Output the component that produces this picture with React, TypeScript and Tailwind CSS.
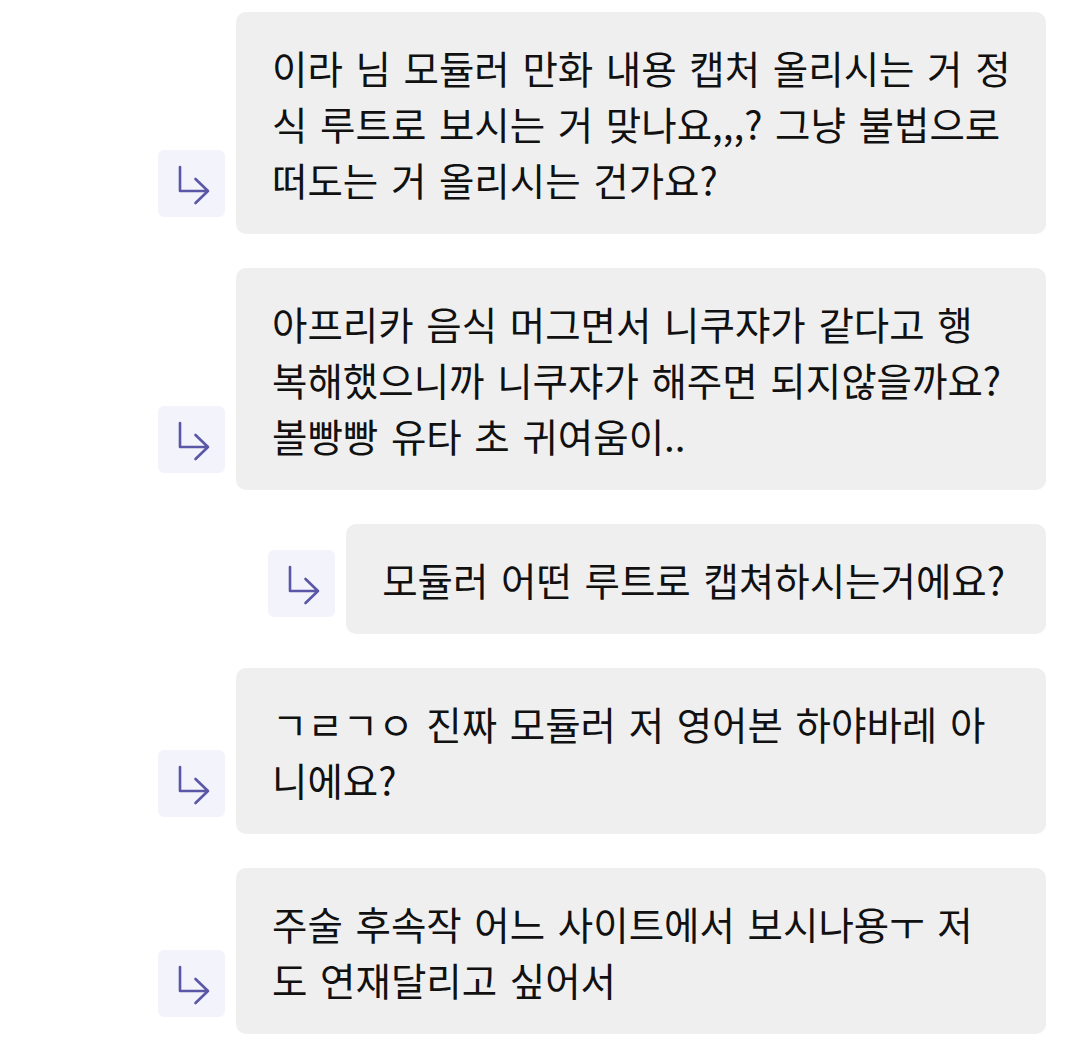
import React from "react";

const messages: string[][] = [
  ["이라 님 모듈러 만화 내용 캡처 올리시는 거 정", "식 루트로 보시는 거 맞나요,,,? 그냥 불법으로", "떠도는 거 올리시는 건가요?"],
  ["아프리카 음식 머그면서 니쿠쟈가 같다고 행", "복해했으니까 니쿠쟈가 해주면 되지않을까요?", "볼빵빵 유타 초 귀여움이.."],
  ["모듈러 어떤 루트로 캡쳐하시는거에요?"],
  ["ㄱㄹㄱㅇ 진짜 모듈러 저 영어본 하야바레 아", "니에요?"],
  ["주술 후속작 어느 사이트에서 보시나용ㅜ 저", "도 연재달리고 싶어서"],
];

function ReplyIcon() {
  return (
    <div className="w-[67px] h-[67px] shrink-0 rounded-[6px] bg-[#f3f3fb] mb-[17px] flex items-center justify-center">
      <svg width="67" height="67" viewBox="0 0 67 67" fill="none">
        <path
          d="M22 17 V41 H50 M37.5 29 L50 41 L37.5 53"
          stroke="#5a58a6"
          strokeWidth="2.6"
          strokeLinecap="round"
          strokeLinejoin="round"
        />
      </svg>
    </div>
  );
}

export default function App() {
  return (
    <div
      className="w-[1080px] min-h-[1055px] bg-white pt-[12px] pr-[34px] flex flex-col gap-[34px]"
      style={{ fontFamily: '"Noto Sans CJK KR", "Noto Sans", sans-serif' }}
    >
      {messages.map((lines, i) => (
        <div key={i} className="flex justify-end items-end gap-[11px]">
          <ReplyIcon />
          <div
            className={
              (lines.length > 1 ? "w-[810px] " : "") +
              "bg-[#efefef] rounded-[10px] pl-[36px] pr-[41px] py-[27px] text-[38.5px] leading-[56px] [word-spacing:4px] text-[#111111] whitespace-nowrap"
            }
          >
            {lines.map((l, j) => (
              <div key={j}>{l}</div>
            ))}
          </div>
        </div>
      ))}
    </div>
  );
}
